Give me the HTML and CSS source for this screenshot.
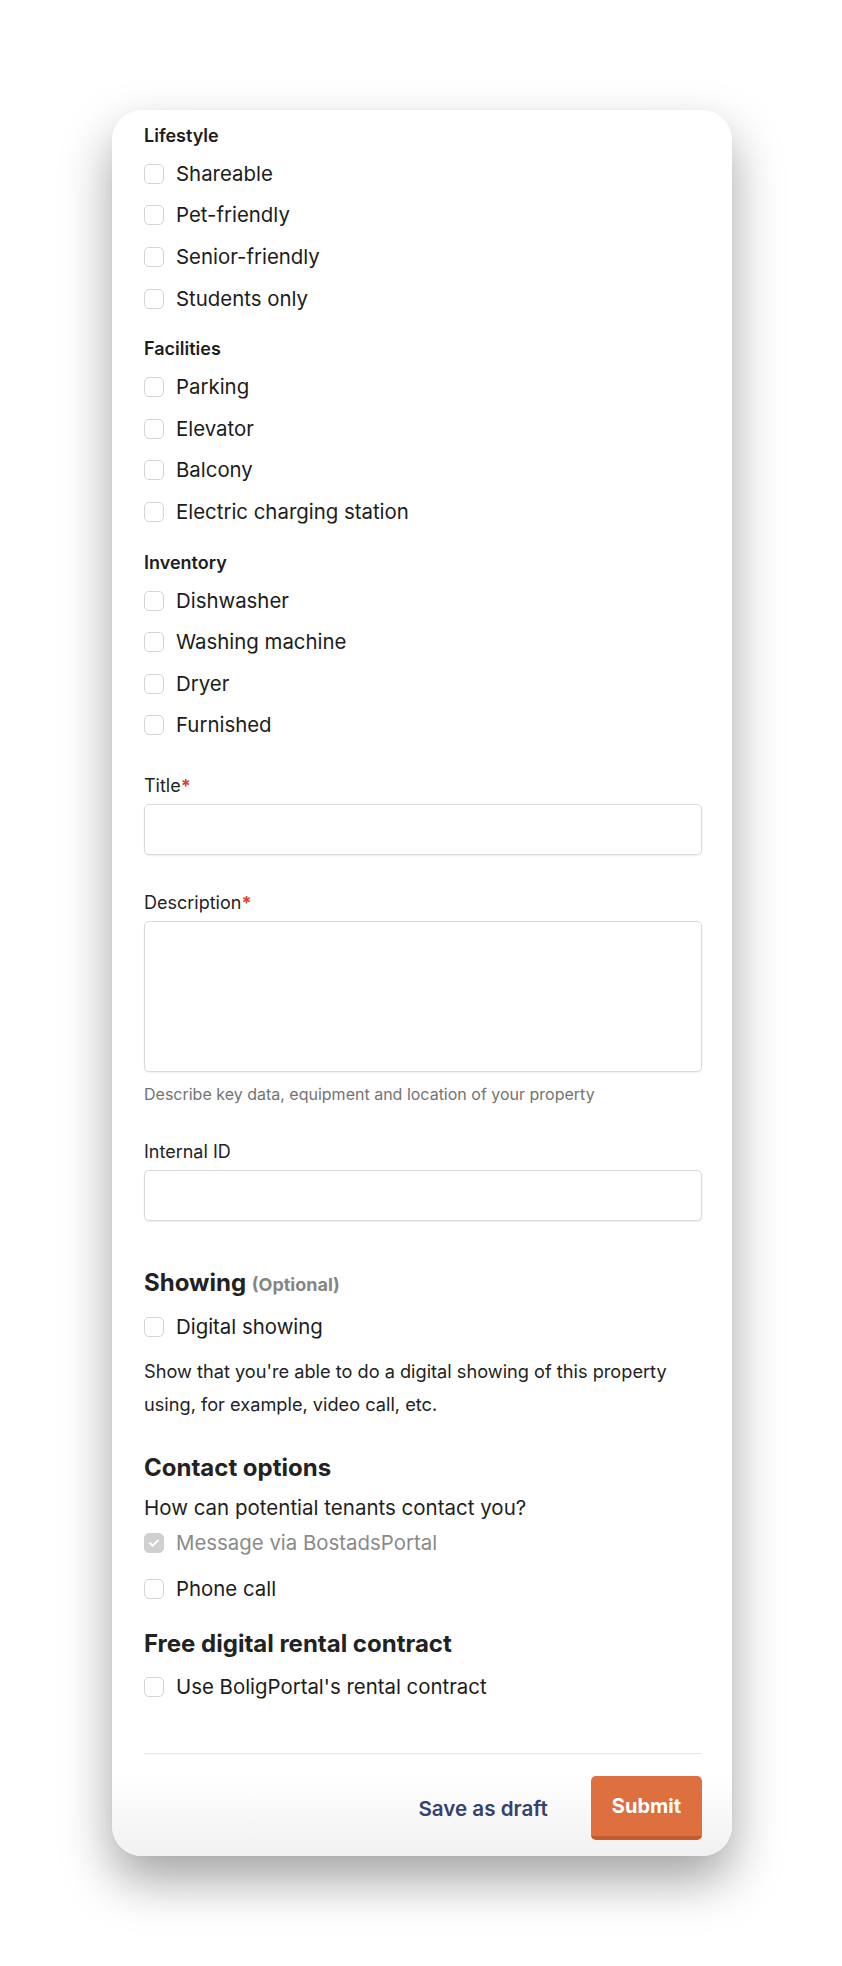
FILE: index.html
```html
<!DOCTYPE html>
<html lang="en">
<head>
<meta charset="utf-8">
<title>Listing form</title>
<link rel="stylesheet" href="styles.css">
</head>
<body>
<div class="page">
  <form class="card">
    <div class="group">
      <h3 class="group-title">Lifestyle</h3>
      <div class="check"><span class="box"></span><span class="check-text">Shareable</span></div>
      <div class="check"><span class="box"></span><span class="check-text">Pet-friendly</span></div>
      <div class="check"><span class="box"></span><span class="check-text">Senior-friendly</span></div>
      <div class="check"><span class="box"></span><span class="check-text">Students only</span></div>
    </div>
    <div class="group">
      <h3 class="group-title">Facilities</h3>
      <div class="check"><span class="box"></span><span class="check-text">Parking</span></div>
      <div class="check"><span class="box"></span><span class="check-text">Elevator</span></div>
      <div class="check"><span class="box"></span><span class="check-text">Balcony</span></div>
      <div class="check"><span class="box"></span><span class="check-text">Electric charging station</span></div>
    </div>
    <div class="group">
      <h3 class="group-title">Inventory</h3>
      <div class="check"><span class="box"></span><span class="check-text">Dishwasher</span></div>
      <div class="check"><span class="box"></span><span class="check-text">Washing machine</span></div>
      <div class="check"><span class="box"></span><span class="check-text">Dryer</span></div>
      <div class="check"><span class="box"></span><span class="check-text">Furnished</span></div>
    </div>

    <div class="field field-first">
      <div class="field-label">Title<span class="req">*</span></div>
      <div class="input"></div>
    </div>
    <div class="field field-desc">
      <div class="field-label">Description<span class="req">*</span></div>
      <div class="input textarea"></div>
      <div class="helper">Describe key data, equipment and location of your property</div>
    </div>
    <div class="field field-id">
      <div class="field-label">Internal ID</div>
      <div class="input"></div>
    </div>

    <section class="section section-showing">
      <h2 class="section-title">Showing <span class="optional">(Optional)</span></h2>
      <div class="check"><span class="box"></span><span class="check-text">Digital showing</span></div>
      <p class="note">Show that you're able to do a digital showing of this property using, for example, video call, etc.</p>
    </section>

    <section class="section section-contact">
      <h2 class="section-title">Contact options</h2>
      <p class="question">How can potential tenants contact you?</p>
      <div class="check is-disabled"><span class="box box-checked"><svg viewBox="0 0 20 20" width="20" height="20"><path d="M6 10.3l2.6 2.6L14 7.4" fill="none" stroke="#fff" stroke-width="2" stroke-linecap="round" stroke-linejoin="round"/></svg></span><span class="check-text">Message via BostadsPortal</span></div>
      <div class="check check-spaced"><span class="box"></span><span class="check-text">Phone call</span></div>
    </section>

    <section class="section section-contract">
      <h2 class="section-title">Free digital rental contract</h2>
      <div class="check"><span class="box"></span><span class="check-text">Use BoligPortal's rental contract</span></div>
    </section>

    <div class="actions">
      <button type="button" class="btn-link">Save as draft</button>
      <button type="button" class="btn-submit">Submit</button>
    </div>
  </form>
</div>
</body>
</html>
```

FILE: styles.css
```css
* {
  box-sizing: border-box;
}

html, body {
  margin: 0;
  padding: 0;
  background: #ffffff;
}

body {
  font-family: Inter, "Noto Sans", "Liberation Sans", sans-serif;
  color: #1f1f1f;
  min-height: 1966px;
}

.page {
  padding: 110px 0 0 112px;
}

.card {
  width: 620px;
  padding: 14px 30px 16px 32px;
  border-radius: 30px;
  background: linear-gradient(to bottom, #ffffff 0, #ffffff calc(100% - 80px), #f1f1f1 100%);
  box-shadow: 0 24px 50px rgba(0, 0, 0, 0.36), 0 0 1px rgba(0, 0, 0, 0.08);
}

/* checkbox groups */
.group + .group {
  margin-top: 18px;
}

.group-title {
  margin: 0 0 5px;
  font-size: 18px;
  line-height: 24px;
  font-weight: 600;
  color: #1d1d1d;
}

.check {
  display: flex;
  align-items: center;
  gap: 12px;
  height: 41.6px;
}

.box {
  flex: none;
  width: 20px;
  height: 20px;
  border: 1.5px solid #d4d4d4;
  border-radius: 5px;
  background: #fff;
  display: flex;
  align-items: center;
  justify-content: center;
}

.box-checked {
  background: #d0d0d0;
  border-color: #d0d0d0;
}

.box-checked svg {
  display: block;
  flex: none;
}

.check-text {
  font-size: 20.4px;
  line-height: 28px;
  color: #1c1c1c;
}

.is-disabled .check-text {
  color: #8a8a8a;
}

.check-spaced {
  margin-top: 5.4px;
}

/* text fields */
.field-first {
  margin-top: 28px;
}

.field-desc {
  margin-top: 36px;
}

.field-id {
  margin-top: 34.5px;
}

.field-label {
  font-size: 18px;
  line-height: 24px;
  color: #232323;
  margin-bottom: 6px;
}

.req {
  color: #d8432a;
  font-weight: 700;
}

.input {
  height: 51px;
  border: 1px solid #dadada;
  border-radius: 5px;
  background: #fff;
  box-shadow: 0 1px 2px rgba(0, 0, 0, 0.07);
}

.textarea {
  height: 151px;
}

.helper {
  margin-top: 11px;
  font-size: 16px;
  line-height: 22px;
  color: #737373;
}

/* sections */
.section-title {
  margin: 0 0 7px;
  font-size: 24px;
  line-height: 30px;
  font-weight: 700;
  color: #222;
}

.optional {
  font-size: 18px;
  font-weight: 700;
  color: #858585;
}

.section-showing {
  margin-top: 47px;
}

.note {
  margin: 7px 0 0;
  font-size: 18.2px;
  line-height: 32.3px;
  color: #222;
}

.section-contact {
  margin-top: 33.5px;
}

.section-contact .section-title {
  margin-bottom: 10.4px;
}

.question {
  margin: 0;
  font-size: 20.5px;
  line-height: 28px;
  color: #1f1f1f;
}

.section-contract {
  margin-top: 18.5px;
}

/* footer actions */
.actions {
  margin-top: 45.7px;
  padding-top: 22px;
  border-top: 1px solid #e6e6e6;
  display: flex;
  justify-content: flex-end;
  align-items: center;
  gap: 43px;
}

.btn-link {
  border: 0;
  background: none;
  padding: 0;
  font-family: inherit;
  font-size: 20.6px;
  font-weight: 600;
  color: #34426d;
  cursor: pointer;
}

.btn-submit {
  height: 64px;
  padding: 0 21px;
  border: 0;
  border-bottom: 4px solid #c55b2d;
  border-radius: 5px;
  background: #de6f3e;
  color: #fff;
  font-family: inherit;
  font-size: 20px;
  font-weight: 700;
  cursor: pointer;
}
```
